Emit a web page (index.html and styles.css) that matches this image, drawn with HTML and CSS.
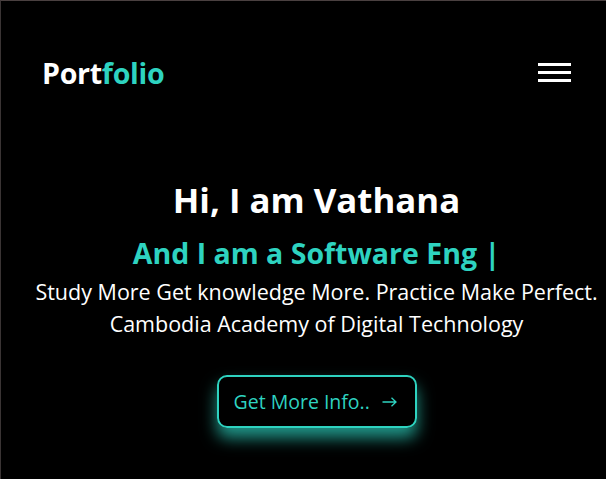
FILE: index.html
```html
<!DOCTYPE html>
<html lang="en">
<head>
<meta charset="utf-8">
<title>Portfolio</title>
<link rel="stylesheet" href="styles.css">
</head>
<body>
<div class="page">
  <header class="header">
    <a class="logo" href="#">Port<span class="accent">folio</span></a>
    <button class="menu" aria-label="Menu">
      <span class="bar"></span><span class="bar"></span><span class="bar"></span>
    </button>
  </header>
  <section class="hero">
    <h1 class="title">Hi, I am Vathana</h1>
    <h2 class="subtitle">And I am a Software Eng <span class="cursor">|</span></h2>
    <p class="text">Study More Get knowledge More. Practice Make Perfect.</p>
    <p class="text">Cambodia Academy of Digital Technology</p>
    <a class="btn" href="#">Get More Info..
      <svg class="arrow" width="15" height="10" viewBox="0 0 15 10" aria-hidden="true"><path d="M0.5 5H14M9.5 0.8L14 5L9.5 9.2" fill="none" stroke="currentColor" stroke-width="1.3"/></svg>
    </a>
  </section>
</div>
</body>
</html>
```
FILE: styles.css
```css
* { box-sizing: border-box; }
html, body { margin: 0; padding: 0; background: #000; }
body {
  font-family: "Open Sans", "Noto Sans", sans-serif;
  color: #fff;
}
.page {
  width: 606px;
  height: 479px;
  border-top: 1px solid #4a4040;
  border-left: 1px solid #3a3434;
  overflow: hidden;
}
.header {
  display: flex;
  justify-content: space-between;
  align-items: center;
  padding: 52px 35px 0 41px;
}
.logo {
  font-size: 28.6px;
  font-weight: 700;
  color: #fff;
  text-decoration: none;
  letter-spacing: -0.3px;
}
.accent { color: #2ed3c0; }
.menu {
  background: none;
  border: 0;
  padding: 0;
  width: 33px;
  display: flex;
  flex-direction: column;
  gap: 5px;
}
.bar {
  display: block;
  height: 3px;
  background: #fff;
}
.hero {
  display: flex;
  flex-direction: column;
  align-items: center;
  padding: 84px 0 0 26px;
  text-align: center;
}
.title {
  margin: 0;
  font-size: 34.8px;
  font-weight: 700;
  line-height: 48px;
}
.subtitle {
  margin: 10px 0 4px;
  font-size: 28.5px;
  font-weight: 700;
  color: #2ed3c0;
  line-height: 38px;
}
.text {
  margin: 0;
  font-size: 21.5px;
  line-height: 32px;
  white-space: nowrap;
}
.btn {
  margin-top: 35px;
  width: 200px;
  height: 53px;
  display: flex;
  align-items: center;
  padding-left: 15px;
  gap: 12px;
  border: 2px solid #2ed3c0;
  border-radius: 10px;
  color: #2ed3c0;
  font-size: 19.5px;
  text-decoration: none;
  box-shadow: 0 10px 16px rgba(46, 211, 192, 0.7);
}
.arrow { flex: none; margin-top: 1px; }
```
